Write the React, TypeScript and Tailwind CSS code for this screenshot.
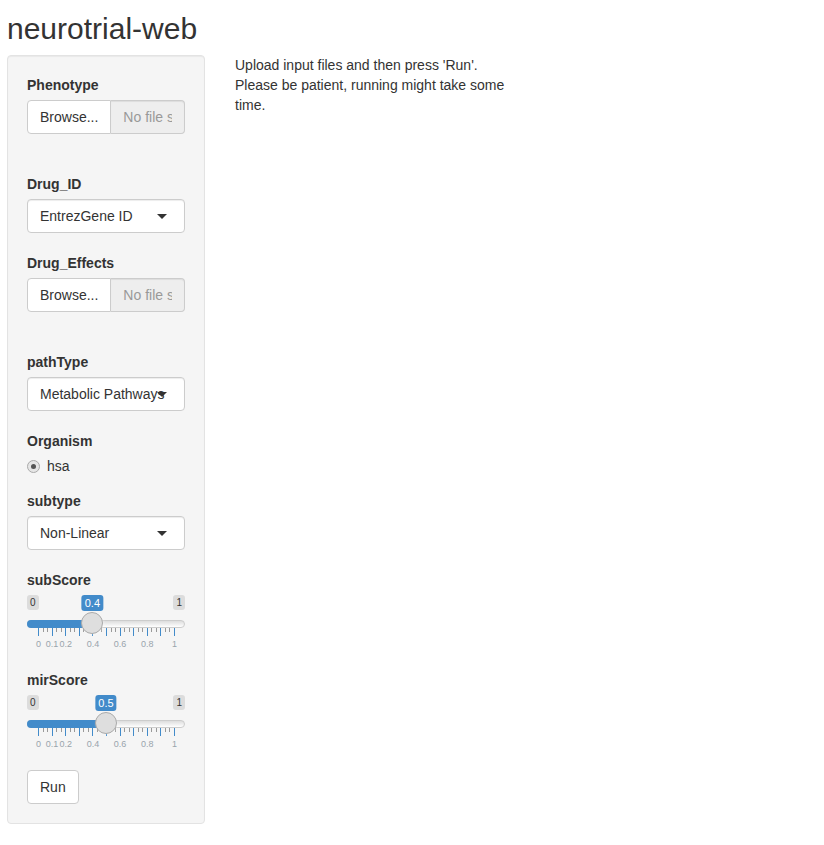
import React from "react";

function Label({ children }: { children: React.ReactNode }) {
  return <div className="h-[20px] leading-[20px] text-[14px] font-bold text-[#333] mb-[5px]">{children}</div>;
}

function FileInput() {
  return (
    <div className="flex h-[34px] w-full">
      <div className="h-[34px] px-[12px] border border-[#ccc] bg-white rounded-l-[4px] leading-[32px] text-[14px] text-[#333] whitespace-nowrap">
        Browse...
      </div>
      <div className="flex-1 min-w-0 h-[34px] px-[12px] border border-l-0 border-[#ccc] bg-[#eee] rounded-r-[4px] leading-[32px] text-[14px] text-[#999] overflow-hidden whitespace-nowrap shadow-[inset_0_1px_1px_rgba(0,0,0,0.075)]">
        <div className="overflow-hidden">No file selected</div>
      </div>
    </div>
  );
}

function Select({ value }: { value: string }) {
  return (
    <div className="relative h-[34px] w-full border border-[#ccc] bg-white rounded-[4px] px-[12px] leading-[32px] text-[14px] text-[#333] whitespace-nowrap shadow-[inset_0_1px_1px_rgba(0,0,0,0.075)]">
      {value}
      <div className="absolute right-[17px] top-[14px] w-0 h-0 border-x-[5px] border-x-transparent border-t-[5px] border-t-[#333]" />
    </div>
  );
}

function Slider({ value }: { value: number }) {
  const pos = (v: number) => 11 + v * 136;
  const big = Array.from({ length: 11 }, (_, i) => i / 10);
  const small: number[] = [];
  for (let i = 0; i < 10; i++) {
    small.push(i / 10 + 0.1 / 3, i / 10 + 0.2 / 3);
  }
  const labels = [
    { v: 0, t: "0" },
    { v: 0.1, t: "0.1" },
    { v: 0.2, t: "0.2" },
    { v: 0.4, t: "0.4" },
    { v: 0.6, t: "0.6" },
    { v: 0.8, t: "0.8" },
    { v: 1, t: "1" },
  ];
  return (
    <div className="relative h-[55px] w-full">
      <div className="absolute left-0 top-0 px-[3px] py-[1px] rounded-[3px] bg-[rgba(0,0,0,0.1)] text-[10px] leading-[13px] text-[#333]">0</div>
      <div className="absolute right-0 top-0 px-[3px] py-[1px] rounded-[3px] bg-[rgba(0,0,0,0.1)] text-[10px] leading-[13px] text-[#333]">1</div>
      <div
        className="absolute top-0 -translate-x-1/2 px-[3px] py-[1px] rounded-[3px] bg-[#428bca] text-[11px] leading-[14px] text-white"
        style={{ left: pos(value) }}
      >
        {String(value)}
      </div>
      <div className="absolute left-0 right-0 top-[25px] h-[8px] rounded-[16px] border border-[#ccc] bg-gradient-to-b from-[#ddd] to-[#fff]" />
      <div className="absolute left-0 top-[25px] h-[8px] rounded-l-[16px] bg-[#428bca]" style={{ width: pos(value) }} />
      {big.map((v) => (
        <div key={"b" + v} className="absolute top-[33px] w-px h-[8px] bg-[#428bca]" style={{ left: Math.round(pos(v)) }} />
      ))}
      {small.map((v, i) => (
        <div key={"s" + i} className="absolute top-[33px] w-px h-[4px] bg-[#999]" style={{ left: Math.round(pos(v)) }} />
      ))}
      {labels.map((l) => (
        <div
          key={l.t}
          className="absolute top-[45px] -translate-x-1/2 text-[9px] leading-[9px] text-[#99a4ac] whitespace-nowrap"
          style={{ left: pos(l.v) + 0.5 }}
        >
          {l.t}
        </div>
      ))}
      <div
        className="absolute top-[17px] w-[22px] h-[22px] rounded-full border border-[#aaa] bg-[#dedede] shadow-[1px_1px_3px_rgba(255,255,255,0.3)]"
        style={{ left: pos(value) - 11 }}
      />
    </div>
  );
}

export default function App() {
  return (
    <div className="min-h-[845px] bg-white font-['Liberation_Sans',Arial,Helvetica,sans-serif] text-[14px] text-[#333] pl-[7px]">
      <h2 className="pt-[12px] mb-[10px] text-[30px] leading-[33px] font-normal text-[#333]">neurotrial-web</h2>
      <div className="flex items-start">
        <div className="w-[198px] shrink-0 bg-[#f5f5f5] border border-[#e3e3e3] rounded-[4px] p-[19px] shadow-[inset_0_1px_1px_rgba(0,0,0,0.05)]">
          <Label>Phenotype</Label>
          <FileInput />
          <div className="h-[40px]" />
          <Label>Drug_ID</Label>
          <Select value="EntrezGene ID" />
          <div className="h-[20px]" />
          <Label>Drug_Effects</Label>
          <FileInput />
          <div className="h-[40px]" />
          <Label>pathType</Label>
          <Select value="Metabolic Pathways" />
          <div className="h-[20px]" />
          <Label>Organism</Label>
          <div className="flex items-center h-[20px] text-[14px]">
            <div className="w-[13px] h-[13px] rounded-full border border-[#aaa] bg-[#e6e6e6] flex items-center justify-center">
              <div className="w-[5px] h-[5px] rounded-full bg-[#555]" />
            </div>
            <span className="ml-[7px]">hsa</span>
          </div>
          <div className="h-[15px]" />
          <Label>subtype</Label>
          <Select value="Non-Linear" />
          <div className="h-[20px]" />
          <Label>subScore</Label>
          <Slider value={0.4} />
          <div className="h-[20px]" />
          <Label>mirScore</Label>
          <Slider value={0.5} />
          <div className="h-[20px]" />
          <div className="inline-block h-[34px] px-[12px] border border-[#ccc] bg-white rounded-[4px] leading-[32px] text-[14px] text-[#333]">
            Run
          </div>
        </div>
        <div className="ml-[30px] w-[280px] leading-[20px] text-[14px] text-[#333]">
          Upload input files and then press 'Run'. Please be patient, running might take some time.
        </div>
      </div>
    </div>
  );
}
